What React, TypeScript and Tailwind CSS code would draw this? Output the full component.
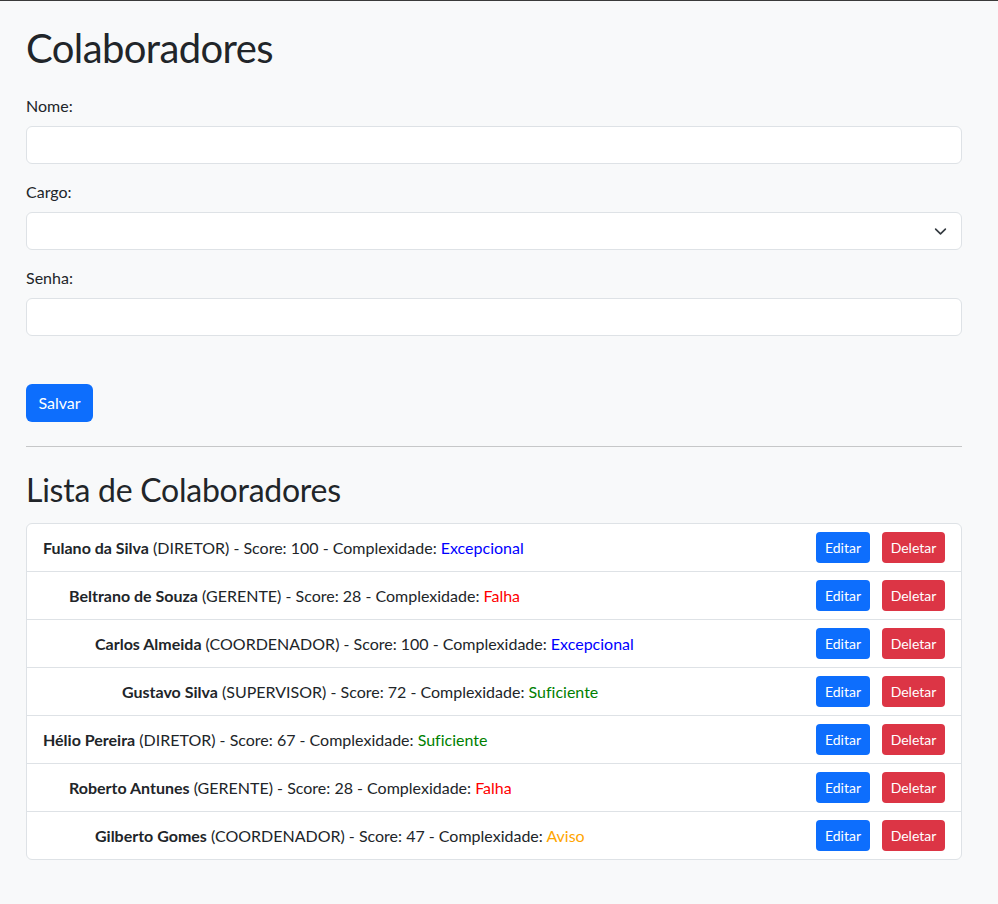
type Colab = {
  nome: string;
  cargo: string;
  score: number;
  complexidade: string;
  nivel: number;
};

const colaboradores: Colab[] = [
  { nome: "Fulano da Silva", cargo: "DIRETOR", score: 100, complexidade: "Excepcional", nivel: 0 },
  { nome: "Beltrano de Souza", cargo: "GERENTE", score: 28, complexidade: "Falha", nivel: 1 },
  { nome: "Carlos Almeida", cargo: "COORDENADOR", score: 100, complexidade: "Excepcional", nivel: 2 },
  { nome: "Gustavo Silva", cargo: "SUPERVISOR", score: 72, complexidade: "Suficiente", nivel: 3 },
  { nome: "Hélio Pereira", cargo: "DIRETOR", score: 67, complexidade: "Suficiente", nivel: 0 },
  { nome: "Roberto Antunes", cargo: "GERENTE", score: 28, complexidade: "Falha", nivel: 1 },
  { nome: "Gilberto Gomes", cargo: "COORDENADOR", score: 47, complexidade: "Aviso", nivel: 2 },
];

const corComplexidade: Record<string, string> = {
  Excepcional: "text-[#0000ff]",
  Falha: "text-[#ff0000]",
  Suficiente: "text-[#008000]",
  Aviso: "text-[#ffa500]",
};

const recuo = ["ml-0", "ml-[26px]", "ml-[52px]", "ml-[79px]"];

function Campo({ label, children }: { label: string; children: React.ReactNode }) {
  return (
    <div className="mb-4">
      <label className="mb-2 block leading-6">{label}</label>
      {children}
    </div>
  );
}

export default function App() {
  return (
    <div
      className="min-h-[904px] border-t border-[#3a3a3a] bg-[#f8f9fa] text-[16px] text-[#212529] [font-variant-ligatures:none]"
      style={{ fontFamily: 'Lato, "Noto Sans", sans-serif' }}
    >
      <div className="mx-[26px] w-[936px] pt-[23px]">
        <h1 className="mb-[22px] text-[40px] font-normal leading-[48px] tracking-[-0.6px]">Colaboradores</h1>

        <Campo label="Nome:">
          <input className="block h-[38px] w-full rounded-[6px] border border-[#dee2e6] bg-white px-3" />
        </Campo>

        <Campo label="Cargo:">
          <div className="relative h-[38px] w-full rounded-[6px] border border-[#dee2e6] bg-white">
            <svg
              className="absolute right-[14px] top-[12px]"
              width="13"
              height="13"
              viewBox="0 0 16 16"
              fill="none"
              stroke="#343a40"
              strokeWidth="2"
              strokeLinecap="round"
              strokeLinejoin="round"
            >
              <path d="m2 5 6 6 6-6" />
            </svg>
          </div>
        </Campo>

        <Campo label="Senha:">
          <input type="password" className="block h-[38px] w-full rounded-[6px] border border-[#dee2e6] bg-white px-3" />
        </Campo>

        <button className="mt-[32px] h-[38px] w-[67px] rounded-[6px] bg-[#0d6efd] text-white">Salvar</button>

        <hr className="my-6 border-t border-[#c6c7c8]" />

        <h2 className="mb-[14px] text-[32px] font-normal leading-[38px] tracking-[-0.25px]">Lista de Colaboradores</h2>

        <ul className="rounded-[6px] border border-[#dee2e6] bg-white">
          {colaboradores.map((c, i) => (
            <li
              key={i}
              className={`flex items-center justify-between px-4 ${i > 0 ? "h-[48px] border-t border-[#dee2e6]" : "h-[47px]"}`}
            >
              <span className={recuo[c.nivel]}>
                <strong className="font-bold">{c.nome}</strong> ({c.cargo}) - Score: {c.score} - Complexidade:{" "}
                <span className={corComplexidade[c.complexidade]}>{c.complexidade}</span>
              </span>
              <div className="flex gap-3">
                <button className="h-[31px] w-[54px] rounded-[4px] bg-[#0d6efd] text-[14px] text-white">Editar</button>
                <button className="h-[31px] w-[63px] rounded-[4px] bg-[#dc3545] text-[14px] text-white">Deletar</button>
              </div>
            </li>
          ))}
        </ul>
      </div>
    </div>
  );
}
